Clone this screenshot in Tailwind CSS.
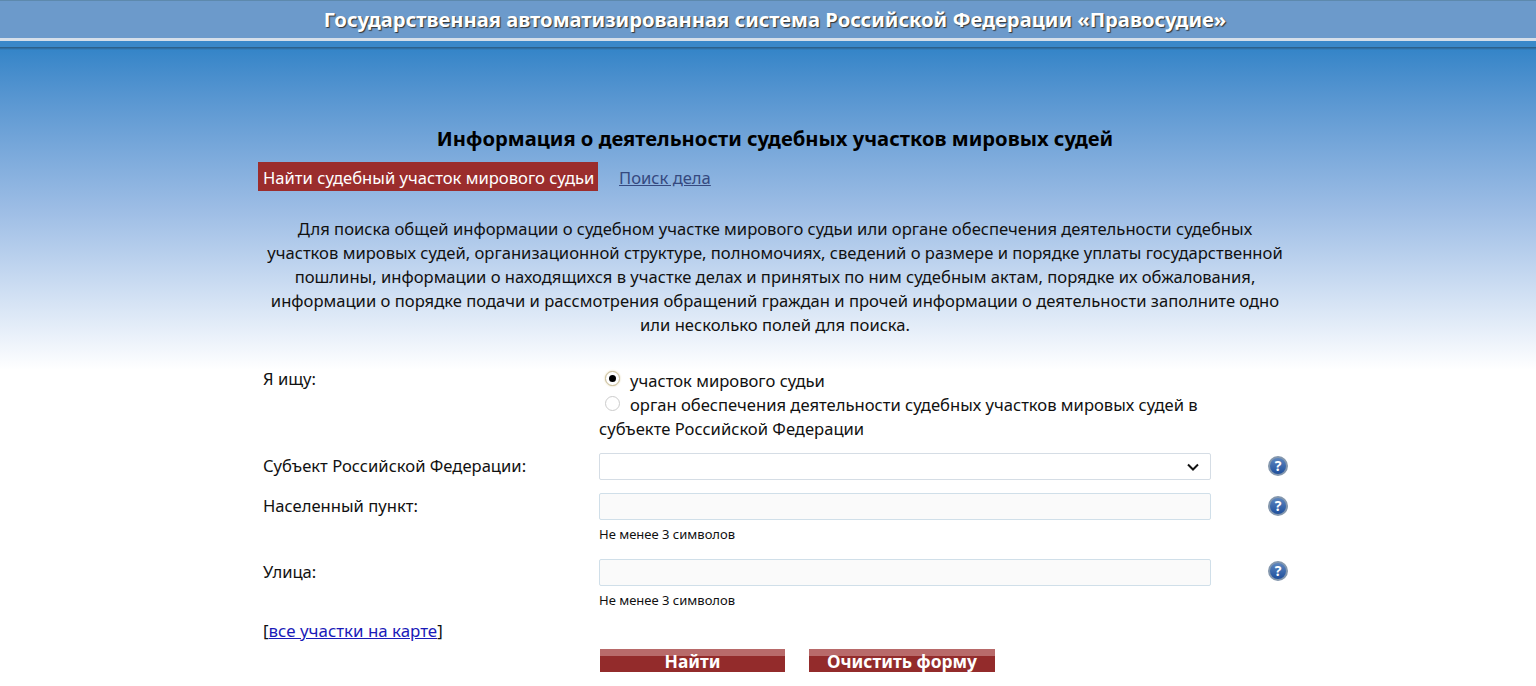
<!DOCTYPE html>
<html lang="ru">
<head>
    <meta charset="UTF-8">
    <title>Правосудие</title>
    <script src="https://cdn.jsdelivr.net/npm/@tailwindcss/browser@4"></script>
</head>
<body class="h-[686px] overflow-hidden bg-white font-['Noto_Sans',sans-serif] text-[16.6px] leading-[24px] text-[#111]">
    <!-- header bar -->
    <div class="h-[38px] border-t border-[#5d89ad] bg-[#6c9acb] pl-[14px] text-center font-bold text-[20.2px] leading-[36px] text-white [text-shadow:1px_1px_1px_#333]">
        Государственная автоматизированная система Российской Федерации «Правосудие»
    </div>
    <div class="h-[3px] bg-[#d5dfea]"></div>
    <div class="h-[6px] bg-[#3a88c9]"></div>
    <div class="h-[3px] bg-gradient-to-b from-[#2a5a80] to-[#3585c8]"></div>

    <div class="h-[320px] bg-gradient-to-b from-[#3585c8] via-[#9dbde5] via-50% to-white pl-[258px]">
        <div class="w-[1034px]">
            <h1 class="pt-[76px] text-center text-[20.2px] font-bold leading-[24px] text-black">Информация о деятельности судебных участков мировых судей</h1>
            <div class="mt-[12px] flex items-center">
                <span class="h-[29px] w-[340px] whitespace-nowrap bg-[#9b2d2d] pl-[5px] leading-[31px] text-white">Найти судебный участок мирового судьи</span>
                <a href="#" class="ml-[21px] mt-[2px] text-[#35497f] underline">Поиск дела</a>
            </div>
            <p class="mt-[26px] text-center">
                Для поиска общей информации о судебном участке мирового судьи или органе обеспечения деятельности судебных<br>
                участков мировых судей, организационной структуре, полномочиях, сведений о размере и порядке уплаты государственной<br>
                пошлины, информации о находящихся в участке делах и принятых по ним судебным актам, порядке их обжалования,<br>
                информации о порядке подачи и рассмотрения обращений граждан и прочей информации о деятельности заполните одно<br>
                или несколько полей для поиска.
            </p>
        </div>
    </div>

    <div class="ml-[258px] w-[1034px]">
        <div class="-mt-[1px] flex">
            <div class="w-[341px] pl-[5px] -mt-[2px]">Я ищу:</div>
            <div class="w-[612px]">
                <div class="flex items-center"><span class="mb-[6px] ml-[6px] mr-[10px] flex h-[15px] w-[15px] items-center justify-center rounded-full border border-[#c9bd9a] bg-white shadow-[0_0_2px_#d8c99a]"><span class="h-[7px] w-[7px] rounded-full bg-black"></span></span>участок мирового судьи</div>
                <div><span class="ml-[6px] mr-[10px] inline-block h-[15px] w-[15px] rounded-full border border-[#ccc] bg-white align-[0px]"></span>орган обеспечения деятельности судебных участков мировых судей в субъекте Российской Федерации</div>
            </div>
        </div>

        <div class="mt-[12px] flex h-[27px] items-center">
            <div class="mb-[2px] w-[341px] pl-[5px]">Субъект Российской Федерации:</div>
            <div class="flex h-[27px] w-[612px] items-center justify-end rounded-[2px] border border-[#d5dde5] bg-white pr-[11px]">
                <svg width="12" height="8" viewBox="0 0 12 8"><path d="M1 1.5l5 5 5-5" fill="none" stroke="#111" stroke-width="2"/></svg>
            </div>
            <span class="mb-[1px] ml-[57px] flex h-[20px] w-[20px] items-center justify-center rounded-full border-2 border-[#8497ad] bg-gradient-to-b from-[#5d86bf] to-[#1f4f9c] text-[14px] font-bold leading-none text-white">?</span>
        </div>

        <div class="mt-[13px] flex h-[27px] items-center">
            <div class="mb-[2px] w-[341px] pl-[5px]">Населенный пункт:</div>
            <div class="h-[27px] w-[612px] rounded-[2px] border border-[#d0dfe9] bg-[#fafafa]"></div>
            <span class="mb-[1px] ml-[57px] flex h-[20px] w-[20px] items-center justify-center rounded-full border-2 border-[#8497ad] bg-gradient-to-b from-[#5d86bf] to-[#1f4f9c] text-[14px] font-bold leading-none text-white">?</span>
        </div>
        <div class="ml-[341px] mt-[4px] text-[13px] leading-[20px]">Не менее 3 символов</div>

        <div class="mt-[15px] flex h-[27px] items-center">
            <div class="mb-[2px] w-[341px] pl-[5px]">Улица:</div>
            <div class="h-[27px] w-[612px] rounded-[2px] border border-[#d0dfe9] bg-[#fafafa]"></div>
            <span class="mb-[3px] ml-[57px] flex h-[20px] w-[20px] items-center justify-center rounded-full border-2 border-[#8497ad] bg-gradient-to-b from-[#5d86bf] to-[#1f4f9c] text-[14px] font-bold leading-none text-white">?</span>
        </div>
        <div class="ml-[341px] mt-[4px] text-[13px] leading-[20px]">Не менее 3 символов</div>

        <div class="mt-[9px] pl-[5px] text-[16.9px]">[<a href="#" class="text-[#1a1ab8] underline">все участки на карте</a>]</div>

        <div class="mt-[6px] ml-[342px] flex gap-[24px]">
            <div class="h-[23px] w-[185px] bg-gradient-to-b from-[#b86a6a] from-30% to-[#932b2b] to-30% text-center text-[17.4px] font-bold leading-[24px] text-white">Найти</div>
            <div class="h-[23px] w-[186px] bg-gradient-to-b from-[#b86a6a] from-30% to-[#932b2b] to-30% text-center text-[17.4px] font-bold leading-[24px] text-white">Очистить форму</div>
        </div>
    </div>
</body>
</html>
